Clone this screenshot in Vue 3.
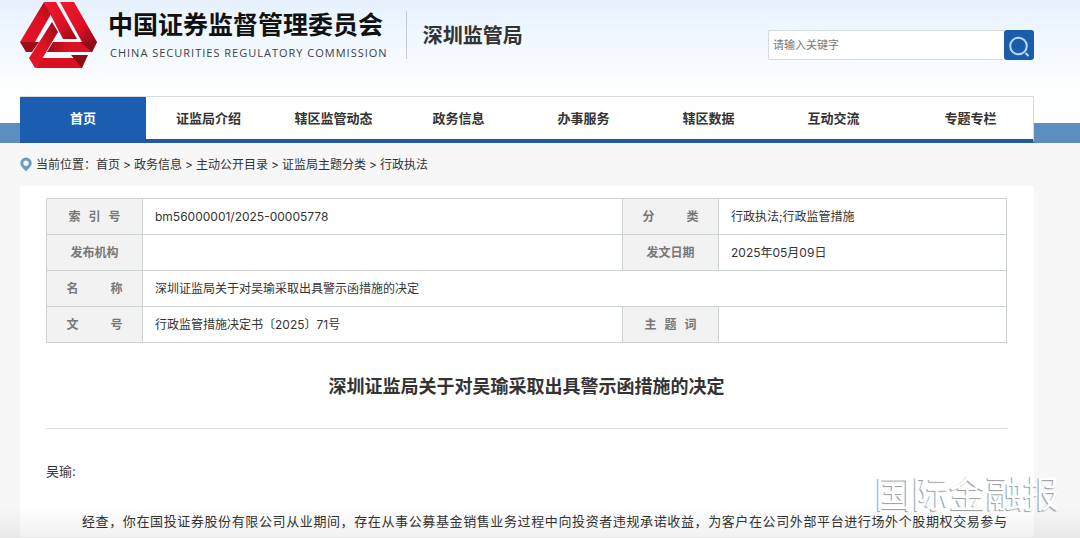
<script setup>
const nav = ['首页', '证监局介绍', '辖区监管动态', '政务信息', '办事服务', '辖区数据', '互动交流', '专题专栏']
const crumbs = ['首页', '政务信息', '主动公开目录', '证监局主题分类', '行政执法']
</script>

<template>
  <div class="page">
    <header class="header">
      <div class="wrap top">
        <a class="brand" href="#">
          <svg class="emblem" viewBox="0 0 78 68" aria-hidden="true">
            <defs>
              <linearGradient id="legLeft" x1="1" y1="0" x2="0" y2="1">
                <stop offset="0" stop-color="#a50d19" />
                <stop offset="0.4" stop-color="#dc1022" />
                <stop offset="1" stop-color="#e3142a" />
              </linearGradient>
              <linearGradient id="fall" x1="0" y1="0" x2="1" y2="1">
                <stop offset="0" stop-color="#ef1a2d" />
                <stop offset="0.6" stop-color="#dd1023" />
                <stop offset="1" stop-color="#8d0c16" />
              </linearGradient>
              <linearGradient id="level" x1="0" y1="0" x2="1" y2="0">
                <stop offset="0" stop-color="#9a0d17" />
                <stop offset="0.4" stop-color="#d91022" />
                <stop offset="1" stop-color="#e3142a" />
              </linearGradient>
              <linearGradient id="rise" x1="1" y1="0" x2="0" y2="1">
                <stop offset="0" stop-color="#920c15" />
                <stop offset="0.5" stop-color="#dd1224" />
                <stop offset="1" stop-color="#e3142a" />
              </linearGradient>
            </defs>
            <path d="M24 1L31 13L15 41H0Z" fill="url(#legLeft)" />
            <path d="M0 41H19L12 51H6Z" fill="#9d0d18" />
            <path d="M24 1H36L57 38H43Z" fill="url(#fall)" />
            <path d="M40 1H54L77 41H62Z" fill="url(#fall)" />
            <path d="M33 41H77L72 51H27Z" fill="url(#level)" />
            <path d="M60 41H77L72 51Z" fill="#8d0c16" />
            <path d="M32 21L38 31L22 58L15 67L9 57Z" fill="url(#rise)" />
            <path d="M22 57H64L62 67H15Z" fill="#d81022" />
            <path d="M51 54H68L62 67Z" fill="#8d0c16" />
          </svg>
          <span class="names">
            <strong>中国证券监督管理委员会</strong>
            <small>CHINA SECURITIES REGULATORY COMMISSION</small>
          </span>
        </a>
        <span class="bureau">深圳监管局</span>
        <form class="search" @submit.prevent>
          <input type="text" aria-label="请输入关键字" placeholder="请输入关键字">
          <button type="submit" aria-label="搜索">
            <svg viewBox="0 0 30 29" aria-hidden="true">
              <circle cx="14.500" cy="15" r="8.300" />
              <path d="M21.500 22L24.500 25" />
            </svg>
          </button>
        </form>
      </div>
      <div class="band">
        <nav class="wrap nav">
          <a v-for="(item, i) in nav" :key="item" href="#" :class="{ active: i === 0 }">{{ item }}</a>
        </nav>
      </div>
    </header>

    <main class="wrap">
      <div class="crumbs">
        <svg viewBox="0 0 12 15" aria-hidden="true">
          <path fill-rule="evenodd" d="M6 0.500A5.700 5.700 0 0 0 0.300 6.200C0.300 9.500 4 11.500 6 14.500C8 11.500 11.700 9.500 11.700 6.200A5.700 5.700 0 0 0 6 0.500ZM6 3.500A2.700 2.700 0 1 1 6 8.900A2.700 2.700 0 0 1 6 3.500Z" />
        </svg>
        <span class="here">当前位置：</span>
        <template v-for="(c, i) in crumbs" :key="c">
          <span v-if="i" class="sep">&gt;</span>
          <a href="#">{{ c }}</a>
        </template>
      </div>

      <article class="sheet">
        <table class="info">
          <colgroup><col class="label"><col class="wide"><col class="label"><col class="rest"></colgroup>
          <tbody>
            <tr>
              <th scope="row"><span class="three"><i>索</i><i>引</i><i>号</i></span></th>
              <td>bm56000001/2025-00005778</td>
              <th scope="row"><span class="two"><i>分</i><i>类</i></span></th>
              <td>行政执法;行政监管措施</td>
            </tr>
            <tr>
              <th scope="row">发布机构</th>
              <td></td>
              <th scope="row">发文日期</th>
              <td>2025年05月09日</td>
            </tr>
            <tr>
              <th scope="row"><span class="two"><i>名</i><i>称</i></span></th>
              <td colspan="3">深圳证监局关于对吴瑜采取出具警示函措施的决定</td>
            </tr>
            <tr>
              <th scope="row"><span class="two"><i>文</i><i>号</i></span></th>
              <td>行政监管措施决定书〔2025〕71号</td>
              <th scope="row"><span class="three"><i>主</i><i>题</i><i>词</i></span></th>
              <td></td>
            </tr>
          </tbody>
        </table>
        <h1>深圳证监局关于对吴瑜采取出具警示函措施的决定</h1>
        <p class="to">吴瑜:</p>
        <p class="body">经查，你在国投证券股份有限公司从业期间，存在从事公募基金销售业务过程中向投资者违规承诺收益，为客户在公司外部平台进行场外个股期权交易参与</p>
      </article>
    </main>
    <div class="watermark">国际金融报</div>
  </div>
</template>

<style>
body {
  margin: 0;
  background: #f7f7f7;
}
</style>

<style scoped>
.page {
  position: relative;
  min-height: 100vh;
  overflow: hidden;
  color: #333;
  font: 12px/18px Inter, "Noto Sans CJK SC", sans-serif;
}
.page::after {
  content: "";
  position: absolute;
  inset: auto 0 0;
  height: 32px;
  background: linear-gradient(transparent, rgba(0, 0, 0, 0.06));
}
a {
  color: inherit;
  text-decoration: none;
}
.wrap {
  margin: 0 46px 0 20px;
}
.header {
  background: linear-gradient(#e6f1fd, #f3f9ff 50px, #fdfefe 90px, #fff);
}
.top {
  display: flex;
  align-items: flex-start;
  height: 96px;
}
.brand {
  display: flex;
  gap: 10px;
  height: 58px;
  padding-right: 18px;
}
.emblem {
  width: 78px;
  height: 68px;
  margin-top: 1px;
}
.names {
  display: flex;
  flex-direction: column;
  padding-top: 9px;
  white-space: nowrap;
}
.names strong {
  color: #111;
  font-size: 25px;
  font-weight: 700;
  line-height: 32px;
}
.names small {
  padding-left: 2px;
  margin-top: 4px;
  color: #3c4148;
  font: 11px/16px "Open Sans", sans-serif;
  letter-spacing: 1px;
}
.bureau {
  height: 48px;
  margin-top: 11px;
  padding-left: 16px;
  border-left: 1px solid #c3cad2;
  font-size: 20px;
  font-weight: 700;
  line-height: 50px;
}
.search {
  display: flex;
  width: 266px;
  height: 30px;
  margin: 30px 0 0 auto;
}
.search input {
  flex: 1;
  min-width: 0;
  box-sizing: border-box;
  padding: 0 4px 2px;
  border: 1px solid #d8dce0;
  border-right: 0;
  border-radius: 2px 0 0 2px;
  background: #fff;
  color: #333;
  font: 11px/18px "Noto Sans CJK SC", sans-serif;
}
.search input::placeholder {
  color: #777;
}
.search button {
  width: 30px;
  padding: 0;
  border: 0;
  border-radius: 3px;
  background: #1c5dab;
}
.search svg {
  display: block;
  width: 30px;
  height: 29px;
  fill: none;
  stroke: #b4dcff;
  stroke-width: 2;
}
.band {
  background: linear-gradient(transparent 27px, #5d8ec0 27px);
}
.nav {
  display: flex;
  height: 47px;
  box-sizing: border-box;
  border: 1px solid #d9dcdf;
  border-width: 1px 1px 4px 0;
  border-bottom-color: #1f5aa6;
  background: #fff;
}
.nav a {
  flex: 0 0 125px;
  box-sizing: border-box;
  font-size: 13px;
  font-weight: 700;
  line-height: 43px;
  text-align: center;
}
.nav a:last-child {
  flex: 1;
  padding-left: 12px;
}
.nav .active {
  flex-basis: 126px;
  background: #1b5eb1;
  color: #fff;
}
.crumbs {
  display: flex;
  align-items: center;
  height: 43px;
}
.crumbs svg {
  width: 12px;
  height: 15px;
  margin-right: 4px;
  fill: #669bc7;
}
.sep {
  margin: 0 3px;
}
.sheet {
  padding: 12px 27px 4px 26px;
  background: #fff;
}
.info {
  width: 100%;
  border-collapse: collapse;
  table-layout: fixed;
}
.label {
  width: 10%;
}
.wide {
  width: 50%;
}
.info th,
.info td {
  height: 36px;
  box-sizing: border-box;
  padding: 1px 12px 0;
  border: 1px solid #ccd1d1;
  text-align: left;
}
.info th {
  background: #f2f2f2;
  color: #777;
  font-weight: 700;
  text-align: center;
}
.info i {
  font-style: normal;
}
.two,
.three {
  display: flex;
  justify-content: space-between;
  width: 56px;
  margin: 0 auto;
}
.three {
  width: 52px;
}
h1 {
  margin: 30px 0 0;
  padding-bottom: 27px;
  border-bottom: 1px solid #ddd;
  font-size: 18px;
  font-weight: 700;
  line-height: 28px;
  text-align: center;
}
.to,
.body {
  margin: 30px 0 0;
  font-size: 13px;
  line-height: 24px;
}
.body {
  margin-top: 26px;
  text-align: justify;
  text-align-last: justify;
  text-indent: 36px;
}
.watermark {
  position: absolute;
  right: 20px;
  bottom: 16px;
  color: #fff;
  font-size: 37px;
  font-weight: 400;
  line-height: 54px;
  text-shadow: -1px 1px 1px #999;
}
</style>
